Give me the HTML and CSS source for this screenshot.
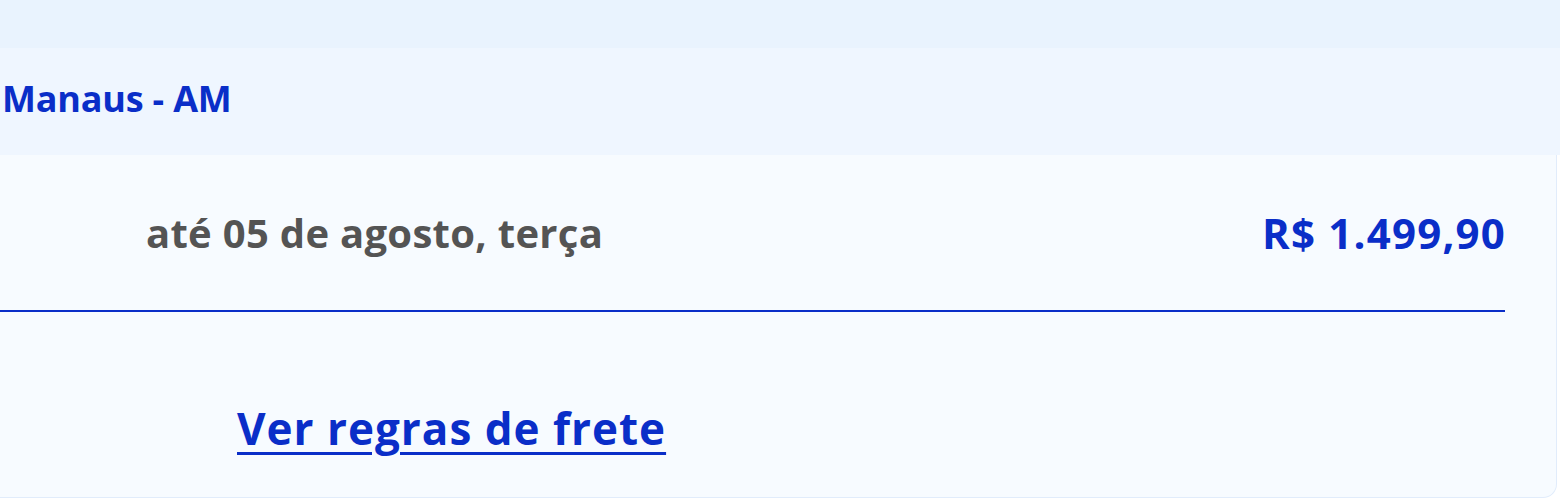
FILE: index.html
```html
<!DOCTYPE html>
<html lang="pt-BR">
<head>
    <meta charset="UTF-8">
    <meta name="viewport" content="width=device-width, initial-scale=1.0">
    <title>Frete</title>
    <link rel="stylesheet" href="styles.css">
</head>
<body>
    <div class="top-band"></div>
    <div class="city-band">
        <span class="city">Manaus - AM</span>
    </div>
    <div class="card">
        <div class="delivery-row">
            <span class="delivery-date">até 05 de agosto, terça</span>
            <span class="delivery-price">R$ 1.499,90</span>
        </div>
        <div class="divider"></div>
        <div class="rules">
            <a href="#" class="rules-link">Ver regras de frete</a>
        </div>
    </div>
</body>
</html>
```

FILE: styles.css
```css
body {
    margin: 0;
    background-color: #ffffff;
    font-family: "Open Sans", "Noto Sans", sans-serif;
    font-weight: 700;
}
.top-band {
    height: 48px;
    background-color: #e9f3fe;
}
.city-band {
    height: 107px;
    display: flex;
    align-items: center;
    padding-left: 2px;
    background-color: #eff6ff;
}
.city {
    font-size: 36px;
    letter-spacing: -0.2px;
    color: #0a2ec8;
    position: relative;
    top: -3px;
}
.card {
    width: 1556px;
    height: 342px;
    background-color: #f7fbff;
    border-right: 1px solid #e1ecfb;
    border-bottom: 1px solid #e1ecfb;
    border-radius: 0 0 14px 0;
}
.delivery-row {
    height: 155px;
    display: flex;
    align-items: center;
    justify-content: space-between;
    padding: 0 51px 0 146px;
}
.delivery-date {
    font-size: 40px;
    letter-spacing: 0.3px;
    color: #545454;
}
.delivery-price {
    font-size: 42px;
    letter-spacing: 1.2px;
    margin-right: -1px;
    color: #0a2ec8;
}
.divider {
    height: 2px;
    margin-right: 51px;
    background-color: #0a2ec8;
}
.rules {
    height: 185px;
    display: flex;
    align-items: center;
    padding: 46px 0 0 237px;
    box-sizing: border-box;
}
.rules-link {
    font-size: 44px;
    letter-spacing: 1px;
    color: #0a2ec8;
    text-decoration-thickness: 3px;
    text-underline-offset: 7px;
}
```
